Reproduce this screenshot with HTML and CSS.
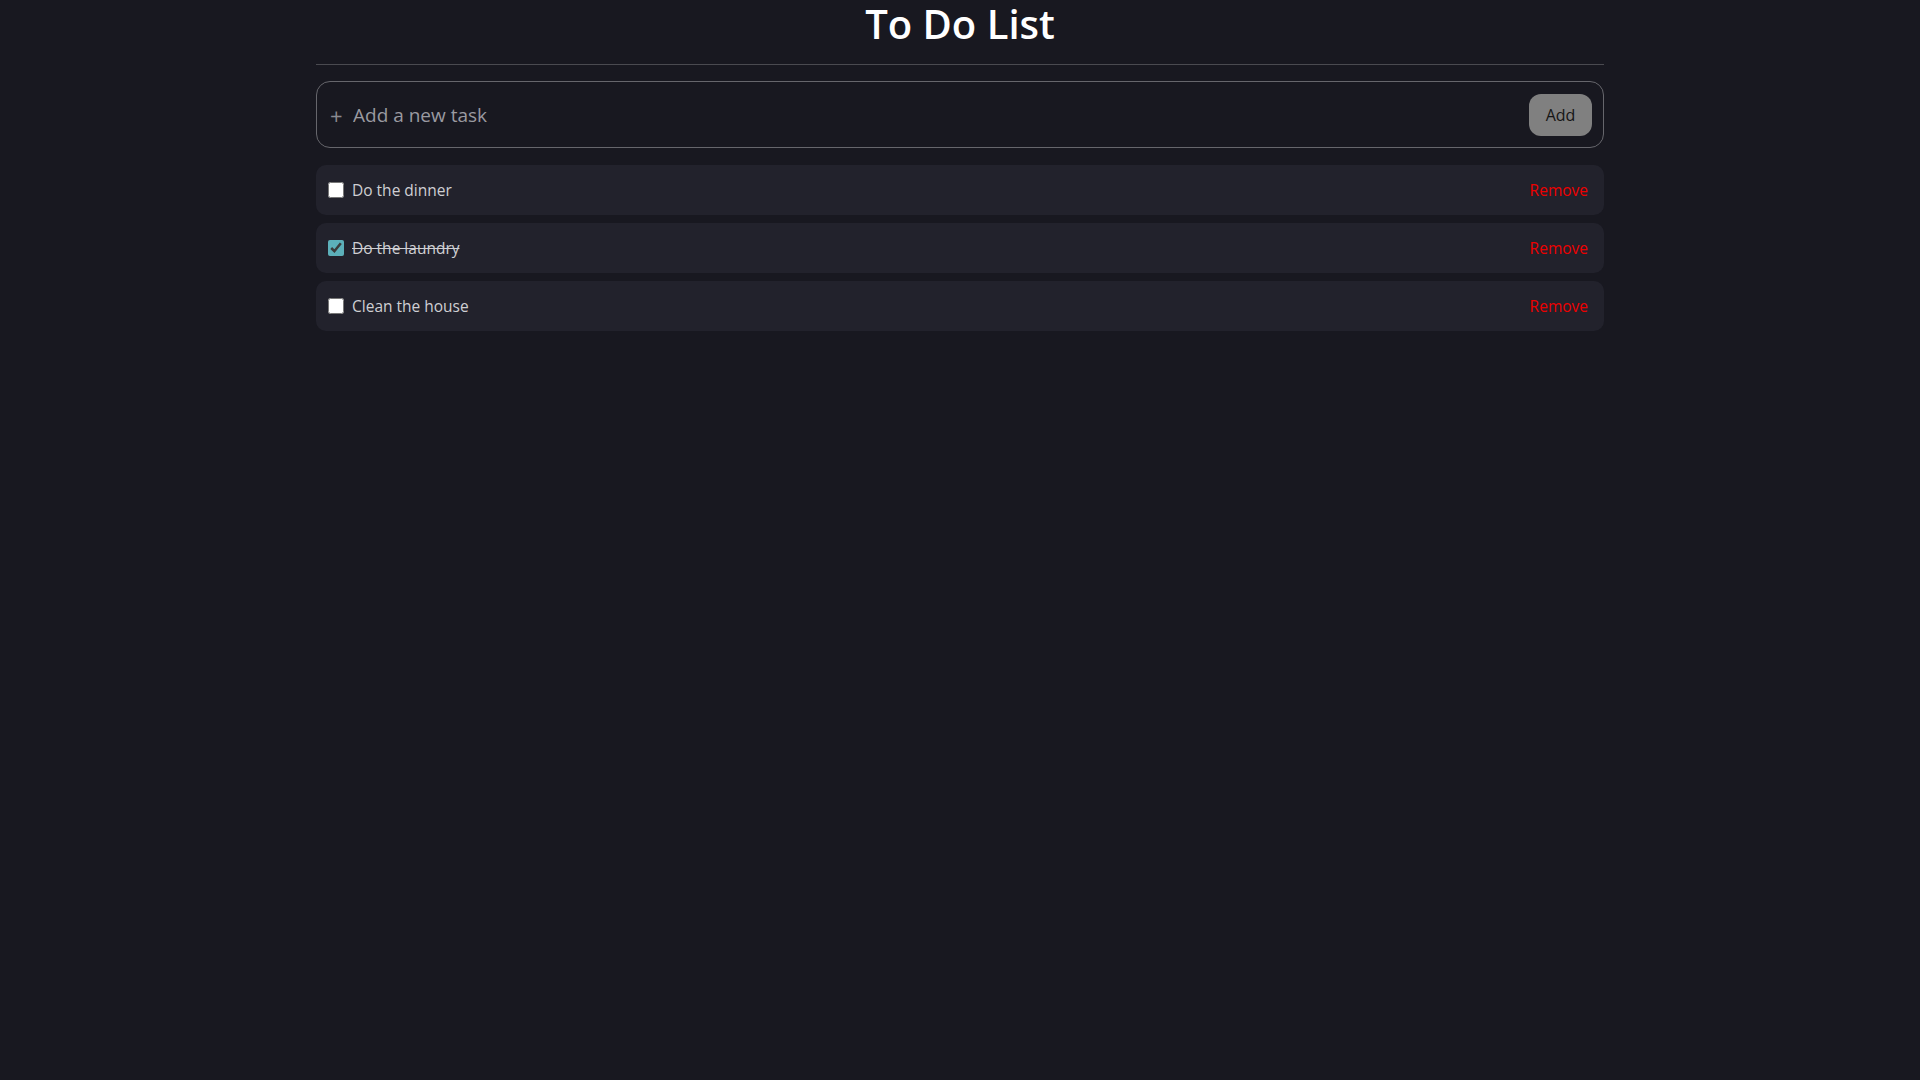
FILE: index.html
```html
<!DOCTYPE html>
<html lang="en">
<head>
<meta charset="utf-8">
<title>To Do List</title>
<link rel="stylesheet" href="styles.css">
</head>
<body>
<main class="app">
  <h1 class="title">To Do List</h1>
  <hr class="divider">
  <form class="new-task">
    <span class="plus">+</span>
    <input class="new-input" type="text" placeholder="Add a new task">
    <button class="add-btn" type="button">Add</button>
  </form>
  <ul class="tasks">
    <li class="task">
      <label class="task-label"><input type="checkbox" class="check"><span class="task-text">Do the dinner</span></label>
      <button class="remove" type="button">Remove</button>
    </li>
    <li class="task done">
      <label class="task-label"><input type="checkbox" class="check" checked><span class="task-text">Do the laundry</span></label>
      <button class="remove" type="button">Remove</button>
    </li>
    <li class="task">
      <label class="task-label"><input type="checkbox" class="check"><span class="task-text">Clean the house</span></label>
      <button class="remove" type="button">Remove</button>
    </li>
  </ul>
</main>
</body>
</html>
```

FILE: styles.css
```css
* { box-sizing: border-box; }
html, body {
  margin: 0;
  padding: 0;
  background: #181820;
  min-height: 100%;
}
body {
  font-family: "Open Sans", "Noto Sans", sans-serif;
  color: #d0d0d4;
}
.app {
  width: 1288px;
  margin: 0 auto;
}
.title {
  margin: 0;
  height: 64px;
  font-size: 40px;
  line-height: 48px;
  font-weight: 600;
  color: #ffffff;
  text-align: center;
}
.divider {
  margin: 0;
  border: 0;
  border-top: 1px solid #4a4a50;
  height: 0;
}
.new-task {
  margin-top: 16px;
  height: 67px;
  border: 1px solid #66666c;
  border-radius: 14px;
  display: flex;
  align-items: center;
  padding: 0 11px 0 13px;
}
.plus {
  color: #8a8a90;
  font-size: 22px;
  line-height: 1;
  width: 23px;
}
.new-input {
  flex: 1;
  background: transparent;
  border: 0;
  outline: none;
  color: #d0d0d4;
  font-family: inherit;
  font-size: 19px;
  padding: 0;
}
.new-input::placeholder { color: #9a9aa0; }
.add-btn {
  width: 63px;
  height: 42px;
  border: 0;
  border-radius: 12px;
  background: #808080;
  color: #151515;
  font-family: inherit;
  font-size: 16px;
}
.tasks {
  list-style: none;
  margin: 17px 0 0;
  padding: 0;
  display: flex;
  flex-direction: column;
  gap: 8px;
}
.task {
  height: 50px;
  background: #22222c;
  border-radius: 10px;
  display: flex;
  align-items: center;
  justify-content: space-between;
  padding: 0 16px 0 12px;
}
.task-label {
  display: flex;
  align-items: center;
  gap: 8px;
}
.check {
  width: 16px;
  height: 16px;
  margin: 0;
  accent-color: #5cb0ba;
}
.task-text {
  font-size: 15.5px;
  color: #cfcfd3;
}
.done .task-text { text-decoration: line-through; }
.remove {
  background: none;
  border: 0;
  padding: 0;
  color: #ee0000;
  font-family: inherit;
  font-size: 15.5px;
}
```
